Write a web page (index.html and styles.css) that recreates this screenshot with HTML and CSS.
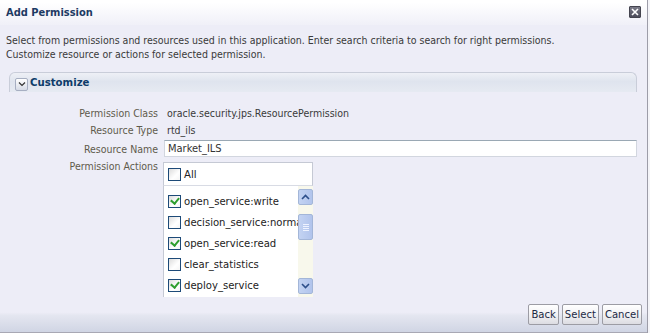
FILE: index.html
```html
<!DOCTYPE html>
<html lang="en">
<head>
    <meta charset="UTF-8">
    <title>Add Permission</title>
    <link rel="stylesheet" href="styles.css">
</head>
<body>
    <div class="dialog">
        <!-- Barre de titre -->
        <div class="titlebar">
            <span>Add Permission</span>
            <button class="close-btn">
                <svg width="8" height="8" viewBox="0 0 8 8"><path d="M1 1L7 7M7 1L1 7" stroke="#fff" stroke-width="1.6"/></svg>
            </button>
        </div>

        <div class="content">
            <p class="intro">Select from permissions and resources used in this application. Enter search criteria to search for right permissions.<br>Customize resource or actions for selected permission.</p>

            <div class="panel">
                <div class="panel-head">
                    <span class="disclose">
                        <svg width="8" height="6" viewBox="0 0 8 6"><path d="M1 1.5L4 4.5L7 1.5" fill="none" stroke="#333" stroke-width="1.2"/></svg>
                    </span>
                    <span>Customize</span>
                </div>

                <div class="form">
                    <label>Permission Class</label>
                    <span class="value">oracle.security.jps.ResourcePermission</span>
                    <label>Resource Type</label>
                    <span class="value">rtd_ils</span>
                    <label>Resource Name</label>
                    <div class="input">Market_ILS</div>
                    <label class="top">Permission Actions</label>
                    <div class="checklist">
                        <div class="all"><span class="cb"></span>All</div>
                        <div class="list">
                            <div class="items">
                                <div class="item"><span class="cb on"></span>open_service:write</div>
                                <div class="item"><span class="cb"></span>decision_service:normal</div>
                                <div class="item"><span class="cb on"></span>open_service:read</div>
                                <div class="item"><span class="cb"></span>clear_statistics</div>
                                <div class="item"><span class="cb on"></span>deploy_service</div>
                            </div>
                            <div class="scrollbar">
                                <span class="sb-btn"><svg width="9" height="6" viewBox="0 0 9 6"><path d="M1 5L4.5 1.5L8 5" fill="none" stroke="#2d4f8a" stroke-width="1.6"/></svg></span>
                                <span class="sb-thumb"><i></i><i></i><i></i><i></i></span>
                                <span class="sb-btn"><svg width="9" height="6" viewBox="0 0 9 6"><path d="M1 1L4.5 4.5L8 1" fill="none" stroke="#2d4f8a" stroke-width="1.6"/></svg></span>
                            </div>
                        </div>
                    </div>
                </div>
            </div>
        </div>

        <!-- Boutons -->
        <div class="footer">
            <button class="btn">Back</button>
            <button class="btn">Select</button>
            <button class="btn">Cancel</button>
        </div>
    </div>
</body>
</html>
```

FILE: styles.css
```css
body {
    margin: 0;
    background: #f4f4f8;
    font-family: "DejaVu Sans Condensed", "DejaVu Sans", sans-serif;
    font-size: 10.5px;
    color: #333;
}
.dialog {
    width: 647px;
    height: 333px;
    border-right: 1px solid #9c9ca8;
    background: #ededf7;
    display: flex;
    flex-direction: column;
}
.titlebar {
    height: 25px;
    padding: 0 6px 0 6px;
    display: flex;
    align-items: center;
    justify-content: space-between;
    background: linear-gradient(#ffffff 10%, #f0f0f8);
}
.titlebar span {
    font-weight: bold;
    font-size: 11px;
    color: #1d3a63;
    margin-top: 0;
}
.close-btn {
    width: 12px;
    height: 12px;
    padding: 0;
    margin-top: -2px;
    border: 1px solid #44444f;
    border-radius: 1px;
    background: linear-gradient(#7a7a88, #4c4c5a);
    display: flex;
    align-items: center;
    justify-content: center;
}
.content {
    flex: 1;
    padding: 0 10px 0 9px;
}
.intro {
    margin: 8px 0 0 -3px;
    line-height: 14px;
    color: #3a3a3a;
}
.panel {
    margin-top: 11px;
}
.panel-head {
    height: 19px;
    border: 1px solid #c9cdd9;
    border-bottom: none;
    border-radius: 6px 6px 0 0;
    background: linear-gradient(#eef0f6, #dfe4ee 45%, #e6eaf2);
    display: flex;
    align-items: center;
    padding-left: 5px;
    font-weight: bold;
    font-size: 11.3px;
    color: #0e3c6a;
}
.disclose {
    width: 11px;
    height: 11px;
    border: 1px solid #a7afc2;
    border-radius: 2px;
    background: linear-gradient(#ffffff, #d6dbe6);
    display: flex;
    align-items: center;
    justify-content: center;
    margin: 3px 2px 0 0;
}
.form {
    display: grid;
    grid-template-columns: 149px 1fr;
    column-gap: 6px;
    align-items: center;
    padding-top: 13px;
}
.form label {
    text-align: right;
    color: #5f5b4c;
    line-height: 17px;
}
.form label.top {
    align-self: start;
    margin-top: -1px;
}
.value {
    padding-left: 3px;
    color: #3a3a3a;
    line-height: 17px;
}
.input {
    height: 15px;
    margin: 1px 0 2px 0;
    padding-left: 3px;
    line-height: 15px;
    background: #fff;
    border: 1px solid #d2d6df;
    border-top-color: #9aa8b4;
    color: #333;
    font-size: 11px;
}
.checklist {
    width: 150px;
    margin-top: 3px;
    margin-left: -1px;
}
.all {
    height: 22px;
    display: flex;
    align-items: center;
    padding-left: 4px;
    background: #fff;
    border: 1px solid #c5c9d4;
    border-bottom: 1px solid #d8dbe4;
    font-size: 11.2px;
    color: #222;
}
.list {
    display: flex;
    height: 111px;
    border-left: 1px solid #c5c9d4;
}
.items {
    flex: 1;
    background: #fff;
    padding-top: 5px;
    overflow: hidden;
    white-space: nowrap;
}
.item {
    height: 21px;
    display: flex;
    align-items: center;
    padding-left: 4px;
    font-size: 11.2px;
    color: #222;
}
.cb {
    flex: none;
    width: 11px;
    height: 11px;
    border: 1px solid #1d4a78;
    margin-right: 3px;
    background: linear-gradient(135deg, #dcdcdc, #ffffff 60%, #f4f4f4);
    position: relative;
}
.cb.on::after {
    content: "";
    position: absolute;
    left: 2px;
    top: 1px;
    width: 6px;
    height: 4px;
    border-left: 2px solid #2e9e2e;
    border-bottom: 2px solid #2e9e2e;
    transform: rotate(-50deg);
}
.scrollbar {
    width: 15px;
    background: #f8f8ec;
    display: flex;
    flex-direction: column;
    padding-top: 3px;
    padding-bottom: 3px;
}
.sb-btn, .sb-thumb {
    width: 13px;
    border: 1px solid #a3b6d8;
    border-radius: 2px;
    background: linear-gradient(90deg, #c3d3f2, #b1c4ec);
    display: flex;
    align-items: center;
    justify-content: center;
}
.sb-btn {
    height: 14px;
}
.sb-thumb {
    height: 24px;
    margin-top: 9px;
    margin-bottom: auto;
    flex-direction: column;
    gap: 1px;
}
.sb-thumb i {
    width: 6px;
    height: 1px;
    background: #eef3ff;
}
.footer {
    height: 34px;
    display: flex;
    justify-content: flex-end;
    align-items: flex-start;
    gap: 3px;
    padding: 5px 5px 0 0;
    box-sizing: border-box;
    background: linear-gradient(#ededf7 40%, #e4e6f0 50%, #d0d5e4 100%);
    border-bottom: 1px solid #a8a8b4;
}
.btn {
    height: 21px;
    padding: 0 2px;
    font-family: "DejaVu Sans Condensed", "DejaVu Sans", sans-serif;
    font-size: 11.2px;
    color: #1c2a44;
    border: 1px solid #9c9ca4;
    border-radius: 2px;
    background: linear-gradient(#ffffff, #f2f2f4 50%, #dcdce2);
    cursor: pointer;
}
```
